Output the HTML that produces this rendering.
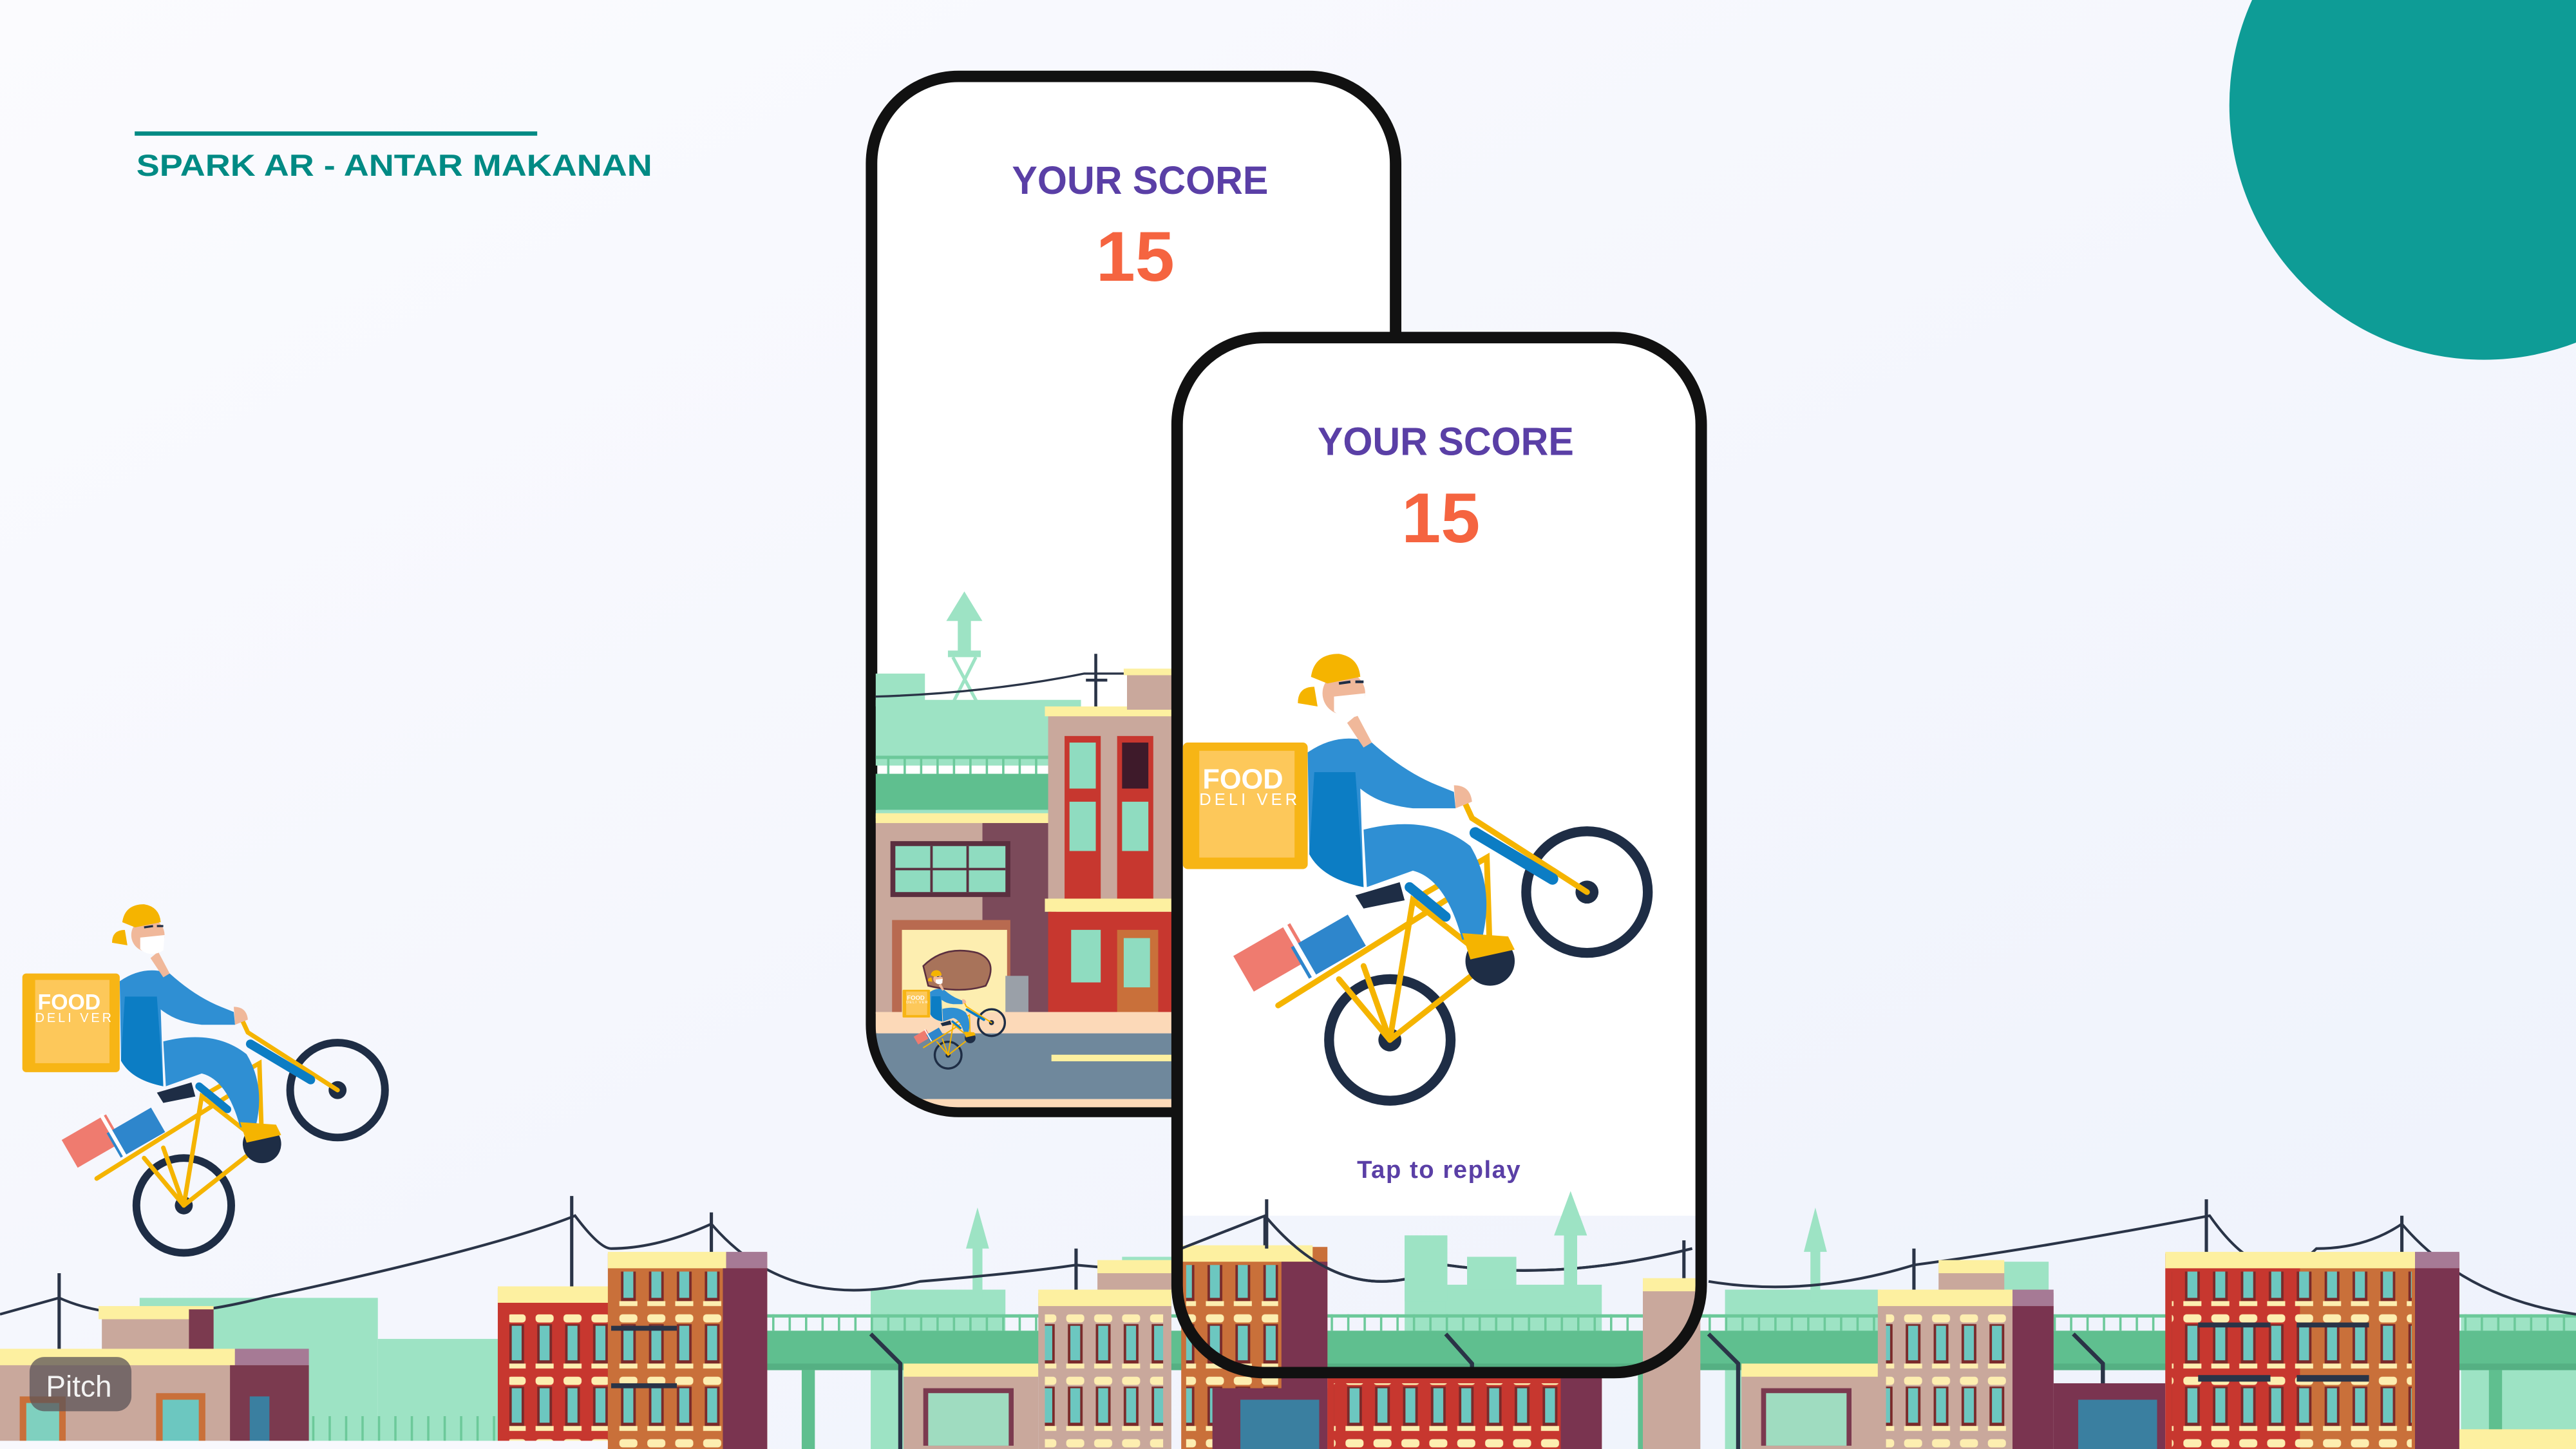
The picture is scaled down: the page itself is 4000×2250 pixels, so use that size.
<!DOCTYPE html>
<html><head><meta charset="utf-8"><style>
html,body{margin:0;padding:0;width:4000px;height:2250px;overflow:hidden;background:#f6f7fd}
svg{display:block}
</style></head><body>
<svg width="4000" height="2250" viewBox="0 0 1568 882" xmlns="http://www.w3.org/2000/svg">
<defs>
<linearGradient id="bg" x1="0" y1="0" x2="1" y2="1">
<stop offset="0" stop-color="#fbfbfe"/><stop offset="1" stop-color="#eef2fc"/></linearGradient>
<pattern id="winR" x="0" y="0" width="17" height="38" patternUnits="userSpaceOnUse">
<rect x="3" y="2" width="11" height="5" rx="2" fill="#fdeeb0"/>
<rect x="4" y="8" width="9" height="24" fill="#7a2a2a"/>
<rect x="5.5" y="9" width="6" height="21" fill="#6cc7c0"/>
<rect x="3" y="32" width="11" height="3" fill="#fdeeb0"/></pattern>
<pattern id="rail" x="0" y="0" width="10" height="10" patternUnits="userSpaceOnUse">
<rect x="0" y="0" width="1.4" height="10" fill="#6cc99a"/></pattern>
<clipPath id="p1"><rect x="533" y="49" width="314" height="625" rx="50"/></clipPath>
<clipPath id="p2"><rect x="719" y="208" width="314" height="624" rx="50"/></clipPath>

<g id="rider">
 <g transform="rotate(-30 790 580)">
  <rect x="755" y="562" width="40" height="25" fill="#ef7b6f"/>
  <rect x="788" y="575" width="40" height="22" fill="#2e86cc"/>
  <rect x="790" y="560" width="3" height="38" fill="#fff"/>
 </g>
 <circle cx="846" cy="633" r="37" fill="none" stroke="#1e2d45" stroke-width="6"/>
 <circle cx="846" cy="633" r="7" fill="#1e2d45"/>
 <circle cx="966" cy="543" r="37" fill="none" stroke="#1e2d45" stroke-width="6"/>
 <circle cx="966" cy="543" r="7" fill="#1e2d45"/>
 <g stroke="#f5b400" stroke-width="3.5" fill="none" stroke-linecap="round">
  <path d="M846 633 L907 585 L860 548 L846 633"/>
  <path d="M860 548 L905 522 L907 585"/>
  <path d="M890 485 L896 498 L966 543"/>
  <path d="M778 612 L880 548"/>
  <path d="M815 596 L846 633 M830 588 L846 633"/>
 </g>
 <path d="M898 507 L945 535" stroke="#0c7dc4" stroke-width="7" stroke-linecap="round"/>
 <path d="M858 540 L880 558" stroke="#0c7dc4" stroke-width="6" stroke-linecap="round"/>
 <circle cx="907" cy="585" r="15" fill="#1e2d45"/>
 <path d="M825 545 L852 537 L855 548 L830 553 Z" fill="#1e2d45"/>
 <rect x="720" y="452" width="76" height="77" rx="3" fill="#f7b515"/>
 <rect x="730" y="457" width="58" height="65" fill="#fdc85a"/>
 <text x="732" y="480" font-family="Liberation Sans,sans-serif" font-size="17" font-weight="bold" fill="#fff">FOOD</text>
 <text x="730" y="490" font-family="Liberation Sans,sans-serif" font-size="10" fill="#fff" letter-spacing="2">DELI VER</text>
 <path d="M796 458 Q815 445 835 452 Q855 470 875 478 L885 482 L886 492 L860 492 Q840 490 828 480 L830 540 Q805 535 797 520 Z" fill="#2f8fd3"/>
 <path d="M800 470 L825 470 L830 540 Q805 535 797 520 Z" fill="#0c7dc4"/>
 <path d="M830 505 Q870 495 895 515 Q910 540 902 572 L890 572 Q880 535 860 530 L832 540 Z" fill="#2f8fd3"/>
 <path d="M885 478 Q895 478 896 488 L886 492 Z" fill="#f0b89a"/>
 <path d="M890 568 L918 570 L922 578 L895 584 Z" fill="#f5b400"/>
 <path d="M820 440 L830 455 L835 452 L826 435 Z" fill="#f0b89a"/>
 <circle cx="818" cy="422" r="13" fill="#f0b89a"/>
 <path d="M798 412 Q800 398 815 398 Q827 400 828 412 L808 416 Z" fill="#f5b400"/>
 <path d="M790 428 Q790 418 800 418 L802 430 Z" fill="#f5b400"/>
 <path d="M812 424 L831 422 L830 434 Q820 440 812 433 Z" fill="#fff"/>
 <path d="M815 416 L822 415 M825 415 L830 415" stroke="#1e2d45" stroke-width="1.6"/>
</g>
</defs>

<rect width="1568" height="882" fill="url(#bg)"/>
<circle cx="1512" cy="64" r="155" fill="#0e9c96"/>

<rect x="82" y="80" width="245" height="2.6" fill="#008a84"/>
<text x="83" y="107" font-family="Liberation Sans,sans-serif" font-size="18.5" font-weight="bold" fill="#008a84" textLength="314" lengthAdjust="spacingAndGlyphs">SPARK AR - ANTAR MAKANAN</text>

<g>
 <g fill="#9de3c4">
  <rect x="85" y="790" width="145" height="92"/>
  <rect x="230" y="815" width="80" height="67"/>
  <rect x="530" y="785" width="82" height="97"/>
  <rect x="592" y="750" width="6" height="40"/><path d="M588 760 L595 735 L602 760 Z"/>
  <rect x="683" y="765" width="30" height="40"/>
  <rect x="855" y="752" width="26" height="130"/>
  <rect x="880" y="782" width="95" height="100"/>
  <rect x="952" y="745" width="8" height="50"/><path d="M946 752 L956 725 L966 752 Z"/>
  <rect x="1050" y="785" width="95" height="97"/>
  <rect x="1102" y="752" width="6" height="40"/><path d="M1098 762 L1105 735 L1112 762 Z"/>
  <rect x="1195" y="768" width="52" height="114"/>
  <rect x="1498" y="800" width="70" height="82"/>
 </g>
 <rect x="465" y="800" width="1103" height="10" fill="url(#rail)"/>
 <rect x="465" y="800" width="1103" height="2" fill="#6cc99a"/>
 <rect x="465" y="810" width="1103" height="24" fill="#5fbf8f"/>
 <rect x="465" y="830" width="1103" height="4" fill="#55b083"/>
 <g fill="#5fbf8f">
  <rect x="488" y="834" width="8" height="48"/><rect x="997" y="834" width="8" height="48"/><rect x="1515" y="834" width="8" height="48"/>
 </g>
 <rect x="185" y="862" width="125" height="20" fill="url(#rail)"/>
 <g fill="none" stroke="#2a3447" stroke-width="1.6">
  <path d="M0 800 L36 790 Q80 810 160 790 Q300 760 350 740 Q365 760 372 760"/>
  <path d="M372 760 Q400 760 433 745 Q480 800 560 780 Q620 775 655 770 L712 775"/>
  <path d="M719 760 L770 740 Q820 800 880 770 Q950 780 1030 760"/>
  <path d="M1040 780 Q1100 790 1165 770 Q1240 760 1345 740 Q1380 790 1410 760 Q1440 760 1462 745 Q1500 790 1568 800"/>
 </g>
 <g stroke="#2a3447" stroke-width="2">
  <path d="M36 775 V830 M348 728 V790 M433 738 V770 M655 760 V810 M770 730 V760 M1025 755 V785 M1165 760 V810 M1343 730 V765 M1462 740 V770"/>
 </g>
 <g stroke="#2a3447" stroke-width="2.5" fill="none">
  <path d="M530 812 L548 830 V882"/><path d="M1040 812 L1058 830 V882"/><path d="M1262 812 L1280 830 V882"/><path d="M880 812 L896 830 V882"/>
 </g>
 <rect x="62" y="797" width="68" height="33" fill="#c9a89c"/><rect x="60" y="795" width="70" height="8" fill="#fdf0a0"/><rect x="115" y="797" width="15" height="33" fill="#7b3a4f"/>
 <rect x="0" y="823" width="188" height="59" fill="#c9a89c"/>
 <rect x="0" y="821" width="143" height="10" fill="#fdf0a0"/><rect x="143" y="821" width="45" height="10" fill="#a67a95"/>
 <rect x="140" y="831" width="48" height="51" fill="#7b3a4f"/>
 <rect x="12" y="850" width="28" height="32" fill="#c9703a"/><rect x="16" y="854" width="20" height="28" fill="#7fd0bf"/>
 <rect x="95" y="848" width="30" height="34" fill="#c9703a"/><rect x="99" y="852" width="22" height="30" fill="#6cc7c0"/>
 <rect x="152" y="850" width="12" height="28" fill="#3a7fa0"/>
 <rect x="303" y="784" width="70" height="98" fill="#c7372f"/>
 <rect x="303" y="783" width="70" height="10" fill="#fdf0a0"/>
 <rect x="310" y="800" width="60" height="82" fill="url(#winR)"/>
 <rect x="370" y="763" width="97" height="119" fill="#c9703a"/>
 <rect x="370" y="762" width="72" height="10" fill="#fdf0a0"/><rect x="442" y="762" width="25" height="10" fill="#a67a95"/>
 <rect x="440" y="772" width="27" height="110" fill="#7a3450"/>
 <rect x="372" y="774" width="68" height="108" fill="url(#winR)"/>
 <rect x="372" y="807" width="40" height="3" fill="#2a3447"/><rect x="372" y="842" width="40" height="3" fill="#2a3447"/>
 <rect x="550" y="832" width="82" height="50" fill="#c9a89c"/><rect x="550" y="830" width="82" height="8" fill="#fdf0a0"/>
 <rect x="562" y="845" width="55" height="35" fill="#7b3a4f"/><rect x="565" y="848" width="49" height="32" fill="#9fdcc0"/>
 <rect x="668" y="770" width="45" height="40" fill="#c9a89c"/><rect x="668" y="767" width="45" height="8" fill="#fdf0a0"/>
 <rect x="632" y="787" width="81" height="95" fill="#c9a89c"/><rect x="632" y="785" width="81" height="10" fill="#fdf0a0"/>
 <rect x="636" y="800" width="72" height="82" fill="url(#winR)"/>
 <rect x="719" y="759" width="89" height="123" fill="#c9703a"/><rect x="719" y="758" width="80" height="10" fill="#fdf0a0"/>
 <rect x="780" y="768" width="28" height="114" fill="#7a3450"/>
 <rect x="722" y="770" width="56" height="112" fill="url(#winR)"/>
 <rect x="738" y="845" width="70" height="37" fill="#7a3450"/><rect x="755" y="852" width="48" height="30" fill="#3a7fa0"/>
 <rect x="808" y="838" width="167" height="44" fill="#c7372f"/><rect x="812" y="842" width="140" height="40" fill="url(#winR)"/>
 <rect x="950" y="838" width="25" height="44" fill="#7a3450"/>
 <rect x="1000" y="780" width="35" height="102" fill="#c9a89c"/><rect x="1000" y="778" width="35" height="8" fill="#fdf0a0"/>
 <rect x="1060" y="832" width="85" height="50" fill="#c9a89c"/><rect x="1060" y="830" width="85" height="8" fill="#fdf0a0"/>
 <rect x="1072" y="845" width="55" height="35" fill="#7b3a4f"/><rect x="1075" y="848" width="49" height="32" fill="#9fdcc0"/>
 <rect x="1180" y="770" width="40" height="40" fill="#c9a89c"/><rect x="1180" y="767" width="40" height="8" fill="#fdf0a0"/>
 <rect x="1143" y="787" width="107" height="95" fill="#c9a89c"/><rect x="1143" y="785" width="82" height="10" fill="#fdf0a0"/><rect x="1225" y="785" width="25" height="10" fill="#a67a95"/>
 <rect x="1225" y="795" width="25" height="87" fill="#7a3450"/>
 <rect x="1148" y="800" width="74" height="82" fill="url(#winR)"/>
 <rect x="1250" y="842" width="68" height="40" fill="#7a3450"/><rect x="1265" y="852" width="48" height="30" fill="#3a7fa0"/>
 <rect x="1318" y="763" width="179" height="119" fill="#c7372f"/>
 <rect x="1400" y="770" width="70" height="112" fill="#c9703a"/>
 <rect x="1318" y="762" width="152" height="10" fill="#fdf0a0"/><rect x="1470" y="762" width="27" height="10" fill="#a67a95"/>
 <rect x="1470" y="772" width="27" height="110" fill="#7a3450"/>
 <rect x="1322" y="774" width="146" height="108" fill="url(#winR)"/>
 <g fill="#2a3447"><rect x="1338" y="837" width="44" height="4"/><rect x="1398" y="837" width="44" height="4"/><rect x="1338" y="805" width="44" height="3"/><rect x="1398" y="805" width="44" height="3"/></g>
 <rect x="1497" y="870" width="71" height="12" fill="#fdf0a0"/>
 <rect x="0" y="877" width="370" height="5" fill="#f8f8fd"/>
</g>

<use href="#rider" transform="translate(-548 240) scale(0.78)"/>

<rect x="18" y="826" width="62" height="33" rx="9" fill="#5b5458" opacity="0.75"/>
<text x="28" y="850" font-family="Liberation Sans,sans-serif" font-size="18" fill="#f2f2f2">Pitch</text>

<rect x="530.5" y="46.5" width="319" height="630" rx="53" fill="#fff" stroke="#111" stroke-width="7"/>
<g clip-path="url(#p1)">
 <g fill="#9de3c4">
  <rect x="583" y="372" width="8" height="25"/><path d="M576 378 L587 360 L598 378 Z"/>
  <rect x="577" y="396" width="20" height="4"/>
  <path d="M580 400 L595 428 M594 400 L580 428" stroke="#9de3c4" stroke-width="2"/>
  <rect x="533" y="410" width="30" height="20"/>
  <rect x="533" y="426" width="125" height="40"/>
  <rect x="710" y="412" width="10" height="20"/>
 </g>
 <rect x="533" y="460" width="110" height="11" fill="url(#rail)"/>
 <rect x="533" y="460" width="110" height="2" fill="#6cc99a"/>
 <rect x="533" y="471" width="110" height="22" fill="#5fbf8f"/>
 <rect x="533" y="493" width="110" height="5" fill="#9de3c4"/>
 <path d="M533 424 Q600 422 660 410 L715 410" fill="none" stroke="#2a3447" stroke-width="1.3"/>
 <path d="M667 398 V433 M661 414 H674" stroke="#2a3447" stroke-width="1.8"/>
 <rect x="533" y="497" width="110" height="120" fill="#c9a89c"/>
 <rect x="533" y="495" width="110" height="6" fill="#fdf0a0"/>
 <rect x="598" y="501" width="42" height="116" fill="#7b4a5a"/>
 <rect x="542" y="512" width="73" height="34" fill="#5b2f3f"/>
 <rect x="545" y="515" width="67" height="28" fill="#8fdcc0"/>
 <path d="M567 515 V543 M589 515 V543 M545 529 H612" stroke="#5b2f3f" stroke-width="1.5"/>
 <rect x="543" y="560" width="72" height="57" fill="#b86a50"/>
 <rect x="549" y="566" width="64" height="51" fill="#fdeeb0"/>
 <path d="M562 588 Q575 575 595 580 Q608 585 600 600 Q585 605 565 600 Z" fill="#a8735a" stroke="#5b2f3f" stroke-width="1"/>
 <rect x="612" y="594" width="14" height="22" fill="#9aa0a8"/>
 <rect x="638" y="433" width="80" height="118" fill="#c9a89c"/>
 <rect x="636" y="430" width="82" height="6" fill="#fdf0a0"/>
 <rect x="686" y="410" width="30" height="22" fill="#c9a89c"/><rect x="684" y="407" width="34" height="4" fill="#fdf0a0"/>
 <rect x="648" y="448" width="22" height="100" fill="#c7372f"/><rect x="651" y="452" width="16" height="28" fill="#8fdcc0"/><rect x="651" y="488" width="16" height="30" fill="#8fdcc0"/>
 <rect x="680" y="448" width="22" height="100" fill="#c7372f"/><rect x="683" y="452" width="16" height="28" fill="#3e1a2a"/><rect x="683" y="488" width="16" height="30" fill="#8fdcc0"/>
 <rect x="636" y="547" width="82" height="8" fill="#fdf0a0"/>
 <rect x="638" y="555" width="80" height="62" fill="#c7372f"/>
 <rect x="652" y="566" width="18" height="32" fill="#8fdcc0"/><rect x="680" y="566" width="25" height="50" fill="#c9703a"/><rect x="684" y="571" width="16" height="30" fill="#8fdcc0"/>
 <rect x="533" y="616" width="190" height="13" fill="#fcd9b8"/>
 <rect x="533" y="629" width="190" height="40" fill="#6f889c"/>
 <rect x="640" y="642" width="80" height="4" fill="#fdf0a0"/>
 <rect x="533" y="669" width="190" height="12" fill="#fcd9b8"/>
 <use href="#rider" transform="translate(391 503) scale(0.22)"/>
</g>
<text x="616" y="118" font-family="Liberation Sans,sans-serif" font-size="24" font-weight="bold" fill="#5a3fa6" textLength="156" lengthAdjust="spacingAndGlyphs">YOUR SCORE</text>
<text x="691" y="171" text-anchor="middle" font-family="Liberation Sans,sans-serif" font-size="43" font-weight="bold" fill="#f56440">15</text>

<path d="M716.5 740 V260 a53 53 0 0 1 53 -53 H983 a53 53 0 0 1 53 53 V740 Z" fill="#fff"/>
<g clip-path="url(#p2)">
 <path d="M719 760 L770 740 Q820 800 880 770 Q950 780 1030 760" fill="none" stroke="#2a3447" stroke-width="1.6"/>
 <rect x="770" y="730" width="2" height="30" fill="#2a3447"/>
 <rect x="952" y="745" width="8" height="50" fill="#9de3c4"/><path d="M946 752 L956 725 L966 752 Z" fill="#9de3c4"/>
 <rect x="855" y="752" width="26" height="40" fill="#9de3c4"/>
 <rect x="893" y="765" width="30" height="20" fill="#9de3c4"/>
</g>
<rect x="716.5" y="205.5" width="319" height="630" rx="53" fill="none" stroke="#111" stroke-width="7"/>
<text x="802" y="277" font-family="Liberation Sans,sans-serif" font-size="24" font-weight="bold" fill="#5a3fa6" textLength="156" lengthAdjust="spacingAndGlyphs">YOUR SCORE</text>
<text x="877" y="330" text-anchor="middle" font-family="Liberation Sans,sans-serif" font-size="43" font-weight="bold" fill="#f56440">15</text>
<use href="#rider"/>
<text x="876" y="717" text-anchor="middle" font-family="Liberation Sans,sans-serif" font-size="15" font-weight="bold" fill="#5a3fa6" letter-spacing="0.6">Tap to replay</text>
</svg>
</body></html>
